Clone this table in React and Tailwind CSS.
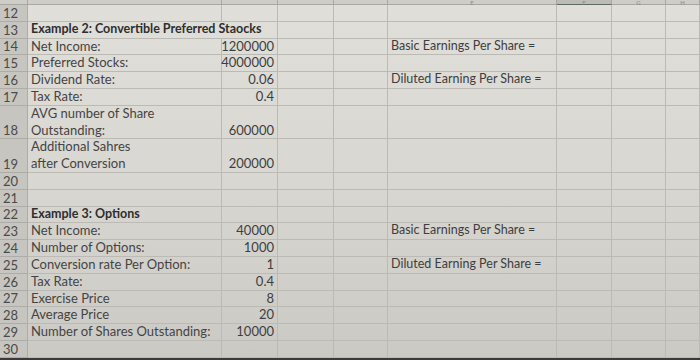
import React from "react";

const rows = [
  { n: "12" },
  { n: "13", a: "Example 2: Convertible Preferred Staocks", bold: true, span: true },
  { n: "14", a: "Net Income:", b: "1200000", e: "Basic Earnings Per Share =" },
  { n: "15", a: "Preferred Stocks:", b: "4000000" },
  { n: "16", a: "Dividend Rate:", b: "0.06", e: "Diluted Earning Per Share =" },
  { n: "17", a: "Tax Rate:", b: "0.4" },
  { n: "18", a: ["AVG number of Share", "Outstanding:"], b: "600000", tall: true },
  { n: "19", a: ["Additional Sahres", "after Conversion"], b: "200000", tall: true },
  { n: "20" },
  { n: "21" },
  { n: "22", a: "Example 3: Options", bold: true },
  { n: "23", a: "Net Income:", b: "40000", e: "Basic Earnings Per Share =" },
  { n: "24", a: "Number of Options:", b: "1000" },
  { n: "25", a: "Conversion rate Per Option:", b: "1", e: "Diluted Earning Per Share =" },
  { n: "26", a: "Tax Rate:", b: "0.4" },
  { n: "27", a: "Exercise Price", b: "8" },
  { n: "28", a: "Average Price", b: "20" },
  { n: "29", a: "Number of Shares Outstanding:", b: "10000" },
  { n: "30" },
];

const cols = "grid grid-cols-[28px_194px_56px_56px_54px_169px_55px_54px_1fr]";

function Row({ r }) {
  const h = r.tall ? "h-[33.6px]" : "h-[16.8px]";
  const cell = `${h} border-b border-r border-[#bcbab4] whitespace-nowrap`;
  return (
    <div className={cols}>
      <div className={`${h} border-b border-r border-[#aeaca6] bg-[#c7c5bf] flex items-end pl-[3px] text-[13px] leading-[16px] text-[#4a4a4a]`}>
        {r.n}
      </div>
      <div
        className={`${cell} ${r.span ? "col-span-2" : ""} pl-[3px] flex flex-col justify-end leading-[16.8px] ${
          r.bold ? "font-bold text-[12.5px] text-[#2e2e2e]" : "text-[13px] text-[#444]"
        }`}
      >
        {Array.isArray(r.a) ? r.a.map((t) => <span key={t}>{t}</span>) : <span>{r.a}</span>}
      </div>
      {!r.span && (
        <div className={`${cell} pr-[3px] flex items-end justify-end text-[13px] leading-[16.8px] text-[#3e3e3e]`}>
          {r.b}
        </div>
      )}
      <div className={cell}></div>
      <div className={cell}></div>
      <div className={`${cell} pl-[3px] flex items-end text-[12.5px] leading-[16.8px] text-[#3e3e3e]`}>
        {r.e}
      </div>
      <div className={cell}></div>
      <div className={cell}></div>
      <div className={cell}></div>
    </div>
  );
}

export default function App() {
  const letters = ["", "", "", "", "", "E", "F", "G", "H"];
  return (
    <div className="w-[700px] h-[360px] overflow-hidden bg-gradient-to-b from-[#e1dfda] via-[#d9d7d1] to-[#cbc9c3] font-['Lato','Open_Sans',sans-serif] flex flex-col">
      <div className={`${cols} h-[5px]`}>
        {letters.map((l, i) => (
          <div
            key={i}
            className={`h-[5px] border-r border-b border-[#a9a7a1] flex items-center justify-center text-[6px] leading-[5px] text-[#8d8b86] ${
              l === "F" ? "bg-[#bdbbb5] border-b-[#5f6b5c]" : "bg-[#cfcdc7]"
            }`}
          >
            {l}
          </div>
        ))}
      </div>
      {rows.map((r) => (
        <Row key={r.n} r={r} />
      ))}
      <div className="flex-1 bg-[#3b3a38]"></div>
    </div>
  );
}
